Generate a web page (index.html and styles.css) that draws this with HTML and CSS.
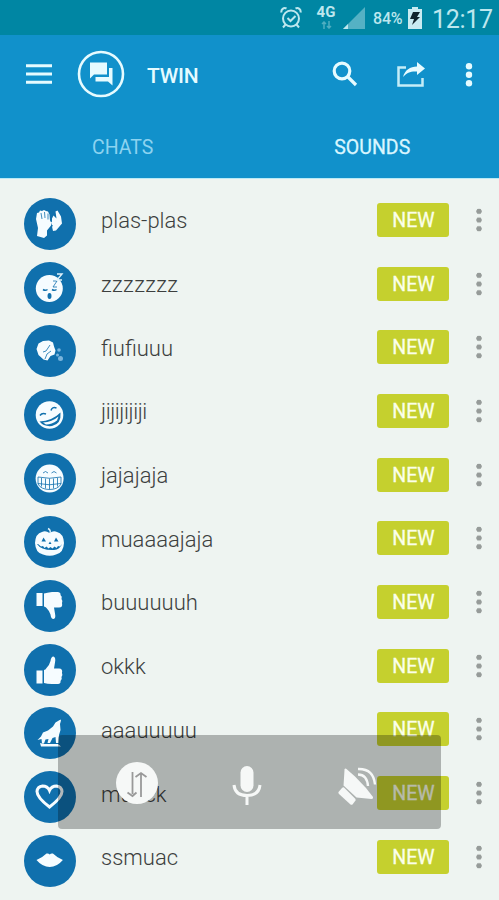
FILE: index.html
```html
<!DOCTYPE html>
<html lang="en">
  <head>
    <title>TWIN</title>
    <meta charset="utf-8" />
    <link rel="stylesheet" href="styles.css">
  </head>
  <body>
    <div class="status">
      <svg class="alarm" width="22" height="24" viewBox="0 0 22 24">
        <circle cx="11" cy="12.5" r="8" />
        <path d="M7.5 12l3 3 5-5M5.500 18.500L3 21.500M16.500 18.500l2.500 3M1.500 6.500a3.500 3.500 0 0 1 5-4M20.500 6.500a3.500 3.500 0 0 0-5-4" />
      </svg>
      <div class="network">
        <span>4G</span>
        <svg width="11" height="8" viewBox="0 0 11 8"><path d="M3 8V1M1 3l2-2 2 2M8 0v7M6 5l2 2 2-2" /></svg>
      </div>
      <svg class="signal" width="22" height="22" viewBox="0 0 22 22">
        <path d="M22 0v22H0z" opacity=".45" />
        <path d="M5 17v5H0z" />
      </svg>
      <span class="percent">84%</span>
      <svg class="battery" width="14" height="22" viewBox="0 0 14 22">
        <path d="M4 0h6v2h4v20H0V2h4z" fill="#c9ebf1" />
        <path d="M5 5h7L9 10h3L4 18l2-6H2z" fill="#10242c" />
      </svg>
      <span class="clock">12:17</span>
    </div>

    <header>
      <div class="bar">
        <svg class="menu" width="28" height="20" viewBox="0 0 28 20">
          <path d="M1 1.800h26M1 10h26M1 18.200h26" />
        </svg>
        <svg class="logo" width="48" height="48" viewBox="0 0 48 48">
          <circle cx="24" cy="24" r="22" />
          <path d="M13 12.500h17v12H17l-4 4z" />
          <path d="M32 18h3.500v17.500L31 31.500H18.500V27H32z" />
        </svg>
        <h1>TWIN</h1>
        <svg class="search" width="26" height="26" viewBox="0 0 26 26">
          <circle cx="10" cy="10" r="7.800" />
          <path d="M15.500 15.500l8.500 8.500" />
        </svg>
        <svg class="share" width="28" height="25" viewBox="0 0 28 25">
          <path class="box" d="M9 5.500H1.500v18h24V16" />
          <path d="M6 15C8 8 13 4.500 20 4.500V0l8 6.500-8 6.500V9.500C14 9 10 10.500 6 15z" />
        </svg>
        <svg class="dots" width="8" height="24" viewBox="0 0 8 24">
          <circle cx="4" cy="3.300" r="3.200" /><circle cx="4" cy="11.800" r="3.200" /><circle cx="4" cy="20.300" r="3.200" />
        </svg>
      </div>
      <nav>
        <a>CHATS</a>
        <a class="active">SOUNDS</a>
      </nav>
    </header>

    <ul class="sounds">
      <li>
        <svg class="icon" viewBox="0 0 52 52">
          <path d="M13 38l1-8-2-9 1-6 2-.5 1-2 2 .5 2-1 2 1 2 .5 1.500 3 .5 6 2 2-1 3-4 5v5l-3 2.500z" />
          <path d="M29 33l3-.5 6-7-1-7-3.500-6-2 1 1 7-3-3-1.500 3v8z" />
          <path class="cut thin" d="M17 15l1 6M20.500 14l.5 6M24 15.500v6M27.500 17l-.5 7M26 33l2.500-6" />
        </svg>
        <span class="name">plas-plas</span><span class="new">NEW</span><i class="more"></i>
      </li>
      <li>
        <svg class="icon" viewBox="0 0 52 52">
          <circle cx="25.300" cy="26.500" r="13.500" />
          <path class="cut" d="M19 27.500q2.300 1.500 4.500 0M28 27.500q2.300 1.500 4.500 0" />
          <ellipse class="hole" cx="25.500" cy="34" rx="2" ry="3" />
          <path class="cut thin" d="M29 19h4l-4 6h4" />
          <path class="line" d="M33 12h5l-5 6h5" />
        </svg>
        <span class="name wide">zzzzzzz</span><span class="new">NEW</span><i class="more"></i>
      </li>
      <li>
        <svg class="icon" viewBox="0 0 52 52">
          <path d="M19 16l6-.5 4 2 1 4 1.500 4-1 4-4 1.500-3 4.500-4-1-5-4.500-2-6 2-5.500z" />
          <path class="cut thin" d="M26 20l-4 6-3 1M27 26l-4 3-2 5" />
          <g class="bubbles"><circle cx="35" cy="25" r="1.800" /><circle cx="33.500" cy="30" r="1.500" /><circle cx="36.500" cy="33.500" r="2.500" /></g>
        </svg>
        <span class="name">fiufiuuu</span><span class="new">NEW</span><i class="more"></i>
      </li>
      <li>
        <svg class="icon" viewBox="0 0 52 52">
          <circle cx="25.500" cy="26" r="13.800" />
          <path class="hole" d="M15.500 32.500Q28 32 36.500 23.500 37.500 35 28 37 20 38 15.500 32.500z" />
          <path d="M19 33.500q9-.5 15.500-6l-1.500 4q-5 4-11 4z" />
          <path class="cut" d="M16 26.500q2-3 6-1.500M27 21.500q1-4 5.500-2.500" />
        </svg>
        <span class="name tight">jijijijiji</span><span class="new">NEW</span><i class="more"></i>
      </li>
      <li>
        <svg class="icon" viewBox="0 0 52 52">
          <circle cx="25.600" cy="25.600" r="14" />
          <path class="cut thin" d="M19 20l2.500-1.500L24 20M27.500 20l2.500-1.500 2.500 1.500M14 24q11.500 2.500 23 0v7q-3 5.500-11.500 5.500T14 31zM14 30.500q11.500 2.500 23 0M17.500 25v8.500M21.500 25.500v10M25.500 25.500v11M29.500 25.500v10M33.500 25v8.500" />
        </svg>
        <span class="name">jajajaja</span><span class="new">NEW</span><i class="more"></i>
      </li>
      <li>
        <svg class="icon" viewBox="0 0 52 52">
          <path d="M25.500 17q4-3 7.500-1 6.500 1.500 7 11-.5 10-8 11.500-6 2.500-13 0-7.500-1.500-8-11.500.5-9.500 7-11 3.500-2 7.500 1z" />
          <path class="line" d="M26 17q1-3-2-4.500" />
          <path class="hole" d="M17.500 25.500l2-4 2.500 4zM30 25.500l2-4 2.500 4zM24.500 28l1.500-2.500 1.500 2.500zM14 28l3 2.500 2-.5 1.500 2 2-1.500 2 2 2-1.500 2 1.500 2-2 2 1.500 1.500-2 2 .5 2-2.500q-2 5.500-8 6-13 .5-17-6z" />
        </svg>
        <span class="name">muaaaajaja</span><span class="new">NEW</span><i class="more"></i>
      </li>
      <li>
        <svg class="icon" viewBox="0 0 52 52">
          <path d="M12.500 13h6v13h-6zM20 13.500q3-1 8-1.500h6q3 .5 2.500 3 2 1.500 1 4 1.500 2 .5 4 1 4.500-3 4.500h-5l1 6q1 5-1.500 5.500-2.500 0-3-4.500-1-3.500-4-6.500-1-1.500-2.500-1.500z" />
        </svg>
        <span class="name">buuuuuuh</span><span class="new">NEW</span><i class="more"></i>
      </li>
      <li>
        <svg class="icon" viewBox="0 0 52 52">
          <path d="M12.500 26.500h6v13h-6zM20 39q3 1 8 1h6q3-.5 2.500-3 2-1.500 1-4 1.500-2 .5-4 1-4.500-3-4.500h-5l1-6q1-5-1.500-6-2.500 0-3 4.500-1 4-4 7-1 2-2.500 2z" />
        </svg>
        <span class="name">okkk</span><span class="new">NEW</span><i class="more"></i>
      </li>
      <li>
        <svg class="icon" viewBox="0 0 52 52">
          <path d="M36.500 12.500l-5 3-2.500 4-5 4-5 2-2 4-3.500 3.500 4-1 .5 4.500h2l1.500-4 3-.5-1 4h2.500l2.500-5 3-1 .5 6h2.500l.5-8 1.500-5-.5-6 1-3.500z" />
          <path d="M16 36l4 1h14l3 2.500H17z" />
        </svg>
        <span class="name">aaauuuuu</span><span class="new">NEW</span><i class="more"></i>
      </li>
      <li>
        <svg class="icon" viewBox="0 0 52 52">
          <path class="heart" d="M25.500 36Q13 26.500 13 20.500q.5-5 5.500-5.500 5 0 7 4.500 2-4.500 7-4.500 5 .5 5.500 5.500 0 6-12.500 15.500z" />
        </svg>
        <span class="name">muack</span><span class="new">NEW</span><i class="more"></i>
      </li>
      <li>
        <svg class="icon" viewBox="0 0 52 52">
          <path d="M12.500 25q6-2.500 10-6.500 2-.5 3.200 1 1.200-1.500 3.200-1 4 4 10 6.500-6 7-13.200 7T12.500 25z" />
        </svg>
        <span class="name">ssmuac</span><span class="new">NEW</span><i class="more"></i>
      </li>
    </ul>

    <!-- floating controls -->
    <div class="controls">
      <svg class="swap" width="42" height="42" viewBox="0 0 42 42">
        <circle cx="21" cy="21" r="21" />
        <path d="M16.500 10v22M11.500 30.500l5 3.500 4-3.500M25 35V11.500M19.500 15l5.500-4 5.500 4" />
      </svg>
      <svg class="mic" width="30" height="40" viewBox="0 0 30 40">
        <rect x="8.500" y="0" width="13" height="26" rx="6.500" />
        <path d="M2 19q1 10.500 13 10.500T28 19M15 30v9" />
      </svg>
      <svg class="speaker" width="40" height="40" viewBox="0 0 40 40">
        <path d="M6.500 3.500q.5-1.500 2-.5L17 10.500 28 22l7 9q.5 2-1.500 2L18.500 31.500 5.500 19.500z" />
        <path d="M6 21.500q-1-.5-2 .5L.5 26q-.5 1 .5 2l11.500 10.500q1 .5 2 0l3-4q.5-1-.5-2z" />
        <path class="wave" d="M20 8.500Q29 8.500 30 20M20 3Q35.500 2.500 37 18.500" />
      </svg>
    </div>
  </body>
</html>
```

FILE: styles.css
```css
* {
  box-sizing: border-box;
}

body {
  position: relative;
  margin: 0;
  height: 900px;
  overflow: hidden;
  background: #eef4f1;
  font-family: Roboto, sans-serif;
}

svg {
  display: block;
  flex: none;
}

.status {
  display: flex;
  align-items: center;
  justify-content: flex-end;
  height: 35px;
  padding-right: 6px;
  background: #0086a3;
  color: #bde7ee;
}

.alarm {
  margin-right: 14px;
  fill: none;
  stroke: #bde7ee;
  stroke-width: 2;
}

.network {
  display: flex;
  flex-direction: column;
  align-items: center;
  width: 20px;
  margin: -2px 7px 0 0;
  font-size: 15px;
  font-weight: bold;
  line-height: 15px;
}

.network svg {
  margin-top: 1px;
  fill: none;
  stroke: #4faec1;
  stroke-width: 1.500px;
}

.signal {
  margin-right: 8px;
  fill: #bde7ee;
}

.percent {
  width: 31px;
  margin: 2px 4px 0 0;
  font-size: 16px;
  font-weight: 500;
  letter-spacing: -.2px;
}

.battery {
  margin-right: 10px;
}

.clock {
  width: 61px;
  margin-top: 4px;
  font-size: 25px;
  line-height: 28px;
  letter-spacing: -.3px;
  white-space: nowrap;
}

header {
  height: 144px;
  background: #1191cb;
  border-bottom: 1px solid #b9eaf6;
  color: #e6fbff;
}

.bar {
  display: flex;
  align-items: center;
  height: 79px;
  padding: 0 26px 0 25px;
}

.menu {
  margin: -1px 24px 0 0;
  fill: none;
  stroke: #e6fbff;
  stroke-width: 3;
}

.logo {
  margin: -2px 22px 0 0;
  fill: #e6fbff;
}

.logo circle {
  fill: none;
  stroke: #e6fbff;
  stroke-width: 2.600;
}

h1 {
  flex: 1;
  margin: 2px 0 0;
  font-size: 21px;
  font-weight: 500;
  letter-spacing: -.2px;
}

.search {
  margin: -1px 39px 0 0;
  fill: none;
  stroke: #e6fbff;
  stroke-width: 3.200;
}

.share {
  margin: -1px 40px 0 0;
  fill: #e6fbff;
}

.share .box {
  fill: none;
  stroke: #c5edf8;
  stroke-width: 2.500;
}

.dots {
  fill: #e6fbff;
}

nav {
  display: flex;
  height: 64px;
  padding-top: 22px;
}

nav a {
  flex: 1;
  padding-right: 4px;
  font-size: 19.500px;
  line-height: 24px;
  text-align: center;
  color: #8cd3f0;
}

nav .active {
  color: #d9f6ff;
  -webkit-text-stroke: .3px #d9f6ff;
}

.sounds {
  margin: 0;
  padding: 9px 15px 0 24px;
  list-style: none;
}

.sounds li {
  display: flex;
  align-items: center;
  height: 63.700px;
}

.icon {
  width: 52px;
  height: 52px;
  margin: 8px 25px 0 0;
  border-radius: 50%;
  background: #1070ad;
  fill: #f6fcff;
}

.icon .hole {
  fill: #1070ad;
}

.icon .cut {
  fill: none;
  stroke: #1070ad;
  stroke-width: 1.500;
}

.icon .thin {
  stroke-width: .8;
}

.icon .line {
  fill: none;
  stroke: #e1f2fa;
  stroke-width: 1.400;
}

.icon .bubbles {
  fill: #79b4dc;
}

.icon .heart {
  fill: none;
  stroke: #f6fcff;
  stroke-width: 3;
}

.name {
  flex: 1;
  margin-top: 2px;
  font-size: 22px;
  font-weight: 300;
  color: #3c3f3e;
}

.name.wide {
  letter-spacing: .35px;
}

.name.tight {
  letter-spacing: -.4px;
}

.new {
  width: 72px;
  height: 34px;
  padding-left: 1px;
  border-radius: 3px;
  background: #c5d02e;
  color: #fbffe9;
  font-size: 19.500px;
  line-height: 35px;
  text-align: center;
  -webkit-text-stroke: .3px #fbffe9;
}

.more {
  width: 6px;
  height: 26px;
  margin-left: 27px;
  margin-right: 2px;
  background: radial-gradient(circle, #969b99 2.400px, transparent 3px) 0 0 / 6px 8.700px;
}

.controls {
  position: absolute;
  left: 58px;
  top: 735px;
  display: flex;
  align-items: flex-start;
  width: 383px;
  height: 94px;
  padding: 27px 0 0 58px;
  border-radius: 4px;
  background: rgba(0, 0, 0, .27);
}

.controls svg {
  fill: #f6f8f7;
}

.swap path {
  fill: none;
  stroke: #999;
  stroke-width: 1.800;
}

.mic {
  margin: 4px 0 0 74px;
}

.mic path {
  fill: none;
  stroke: #f6f8f7;
  stroke-width: 3;
}

.speaker {
  margin: 4px 0 0 76px;
}

.speaker .wave {
  fill: none;
  stroke: #f6f8f7;
  stroke-width: 2.400;
}
```
